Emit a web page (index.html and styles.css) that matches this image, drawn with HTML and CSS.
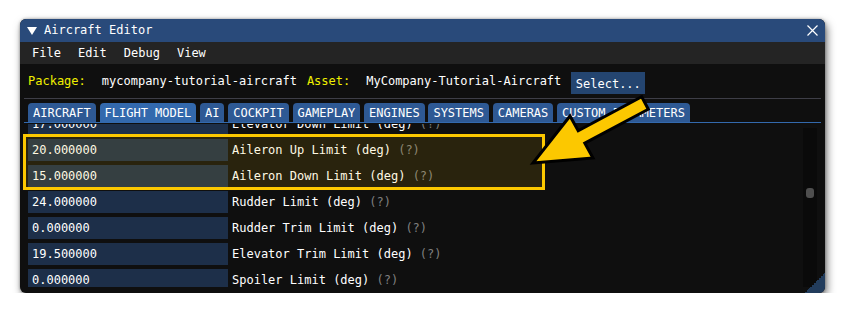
FILE: index.html
```html
<!DOCTYPE html>
<html>
<head>
<meta charset="utf-8">
<link rel="stylesheet" href="styles.css">
</head>
<body>
<div class="window">
  <div class="titlebar">
    <span class="collapse"></span>
    <span class="title">Aircraft Editor</span>
    <svg class="close" width="11" height="11" viewBox="0 0 11 11"><path d="M0.5 0.5 L10.5 10.5 M10.5 0.5 L0.5 10.5" stroke="#ffffff" stroke-width="1.2" fill="none"/></svg>
  </div>
  <div class="menubar">
    <span>File</span><span>Edit</span><span>Debug</span><span>View</span>
  </div>
  <div class="content">
    <div class="pkgrow">
      <span class="key">Package:</span>
      <span class="val">mycompany-tutorial-aircraft</span>
      <span class="key">Asset:</span>
      <span class="val">MyCompany-Tutorial-Aircraft</span>
      <span class="btn">Select...</span>
    </div>
    <div class="sep"></div>
    <div class="tabs">
      <span class="tab">AIRCRAFT</span>
      <span class="tab active">FLIGHT MODEL</span>
      <span class="tab">AI</span>
      <span class="tab">COCKPIT</span>
      <span class="tab">GAMEPLAY</span>
      <span class="tab">ENGINES</span>
      <span class="tab">SYSTEMS</span>
      <span class="tab">CAMERAS</span>
      <span class="tab">CUSTOM PARAMETERS</span>
    </div>
    <div class="tabline"></div>
    <div class="body">
      <div class="rows">
        <div class="list">
          <div class="row"><span class="field">17.000000</span><span class="label">Elevator Down Limit (deg) <span class="help">(?)</span></span></div>
          <div class="row"><span class="field">20.000000</span><span class="label">Aileron Up Limit (deg) <span class="help">(?)</span></span></div>
          <div class="row"><span class="field">15.000000</span><span class="label">Aileron Down Limit (deg) <span class="help">(?)</span></span></div>
          <div class="row"><span class="field">24.000000</span><span class="label">Rudder Limit (deg) <span class="help">(?)</span></span></div>
          <div class="row"><span class="field">0.000000</span><span class="label">Rudder Trim Limit (deg) <span class="help">(?)</span></span></div>
          <div class="row"><span class="field">19.500000</span><span class="label">Elevator Trim Limit (deg) <span class="help">(?)</span></span></div>
          <div class="row"><span class="field">0.000000</span><span class="label">Spoiler Limit (deg) <span class="help">(?)</span></span></div>
        </div>
      </div>
      <div class="scrollbar"><div class="thumb"></div></div>
    </div>
  </div>
  <div class="grip"></div>
  <div class="highlight"></div>
  <svg class="arrow" width="805" height="274" viewBox="0 0 805 274">
    <polygon points="513,144 550,97 558.2,111.8 621.7,77.8 628.3,90.2 564.8,124.2 573,139" fill="#fcc800" stroke="#000000" stroke-width="3" stroke-linejoin="miter"/>
  </svg>
</div>
</body>
</html>
```
FILE: styles.css
```css
* { box-sizing: border-box; }
body {
  margin: 0;
  background: #ffffff;
  font-family: "DejaVu Sans Mono", "Liberation Mono", monospace;
  font-size: 12px;
  color: #ffffff;
}
.window {
  position: relative;
  margin: 19px 0 0 20px;
  width: 805px;
  height: 274px;
  background: #0f0f0f;
  border-radius: 6px;
  overflow: hidden;
  box-shadow: 2px 4px 8px rgba(0,0,0,0.55), 0 0 3px rgba(0,0,0,0.35);
  display: flex;
  flex-direction: column;
}
.titlebar {
  height: 23px;
  background: #294a7a;
  display: flex;
  align-items: center;
  padding: 0 7px;
  white-space: pre;
}
.collapse {
  width: 0;
  height: 0;
  border-left: 5px solid transparent;
  border-right: 5px solid transparent;
  border-top: 8px solid #ffffff;
  margin-right: 7px;
  margin-top: 1px;
}
.title { flex: 1; line-height: 23px; }
.close { margin-right: 0; }
.menubar {
  height: 22px;
  background: #242424;
  display: flex;
  align-items: center;
  gap: 17px;
  padding-left: 12px;
  line-height: 22px;
}
.content {
  flex: 1;
  display: flex;
  flex-direction: column;
  padding: 8px 4px 0 8px;
  min-height: 0;
}
.pkgrow {
  height: 22px;
  display: flex;
  align-items: flex-start;
  white-space: pre;
}
.key { color: #f0f000; line-height: 18px; margin-right: 16px; }
.val { line-height: 18px; margin-right: 10px; }
.btn {
  width: 74px;
  height: 22px;
  background: #244570;
  text-align: center;
  line-height: 22px;
  padding-top: 1px;
}
.sep {
  height: 1px;
  background: #3e3e47;
  margin: 4px 0 0 -4px;
}
.tabs {
  display: flex;
  gap: 3.75px;
  margin-top: 4px;
  height: 19px;
}
.tab {
  background: #2e5994;
  padding: 2px 5px 0 5px;
  line-height: 17px;
  border-radius: 4px 4px 0 0;
  white-space: pre;
}
.tab.active { background: #3369ad; }
.tabline {
  height: 1px;
  background: #3369ad;
  margin-left: -4px;
}
.body {
  margin-top: 1px;
  height: 163px;
  display: flex;
  padding-right: 4px;
}
.rows {
  flex: 1;
  overflow: hidden;
}
.list { margin-top: -11px; }
.row {
  display: flex;
  height: 22px;
  margin-bottom: 4px;
  line-height: 22px;
  white-space: pre;
}
.field {
  width: 200px;
  background: #1d2f49;
  padding-left: 4px;
}
.label { margin-left: 4px; }
.help { color: #808080; }
.scrollbar {
  width: 14px;
  margin-top: 4px;
  background: #0a0a0a;
  display: flex;
  flex-direction: column;
  align-items: center;
}
.thumb {
  width: 8px;
  height: 10px;
  margin-top: 60px;
  background: #4f4f4f;
  border-radius: 3px;
}
.grip {
  position: absolute;
  right: 0;
  bottom: 0;
  width: 20px;
  height: 20px;
  background: linear-gradient(135deg, transparent 50%, #223c5c 50%);
}
.highlight {
  position: absolute;
  left: 3px;
  top: 115px;
  width: 522px;
  height: 56px;
  border: 3px solid #fcc800;
  background: rgba(255,200,0,0.11);
}
.arrow {
  position: absolute;
  left: 0;
  top: 0;
}
```
